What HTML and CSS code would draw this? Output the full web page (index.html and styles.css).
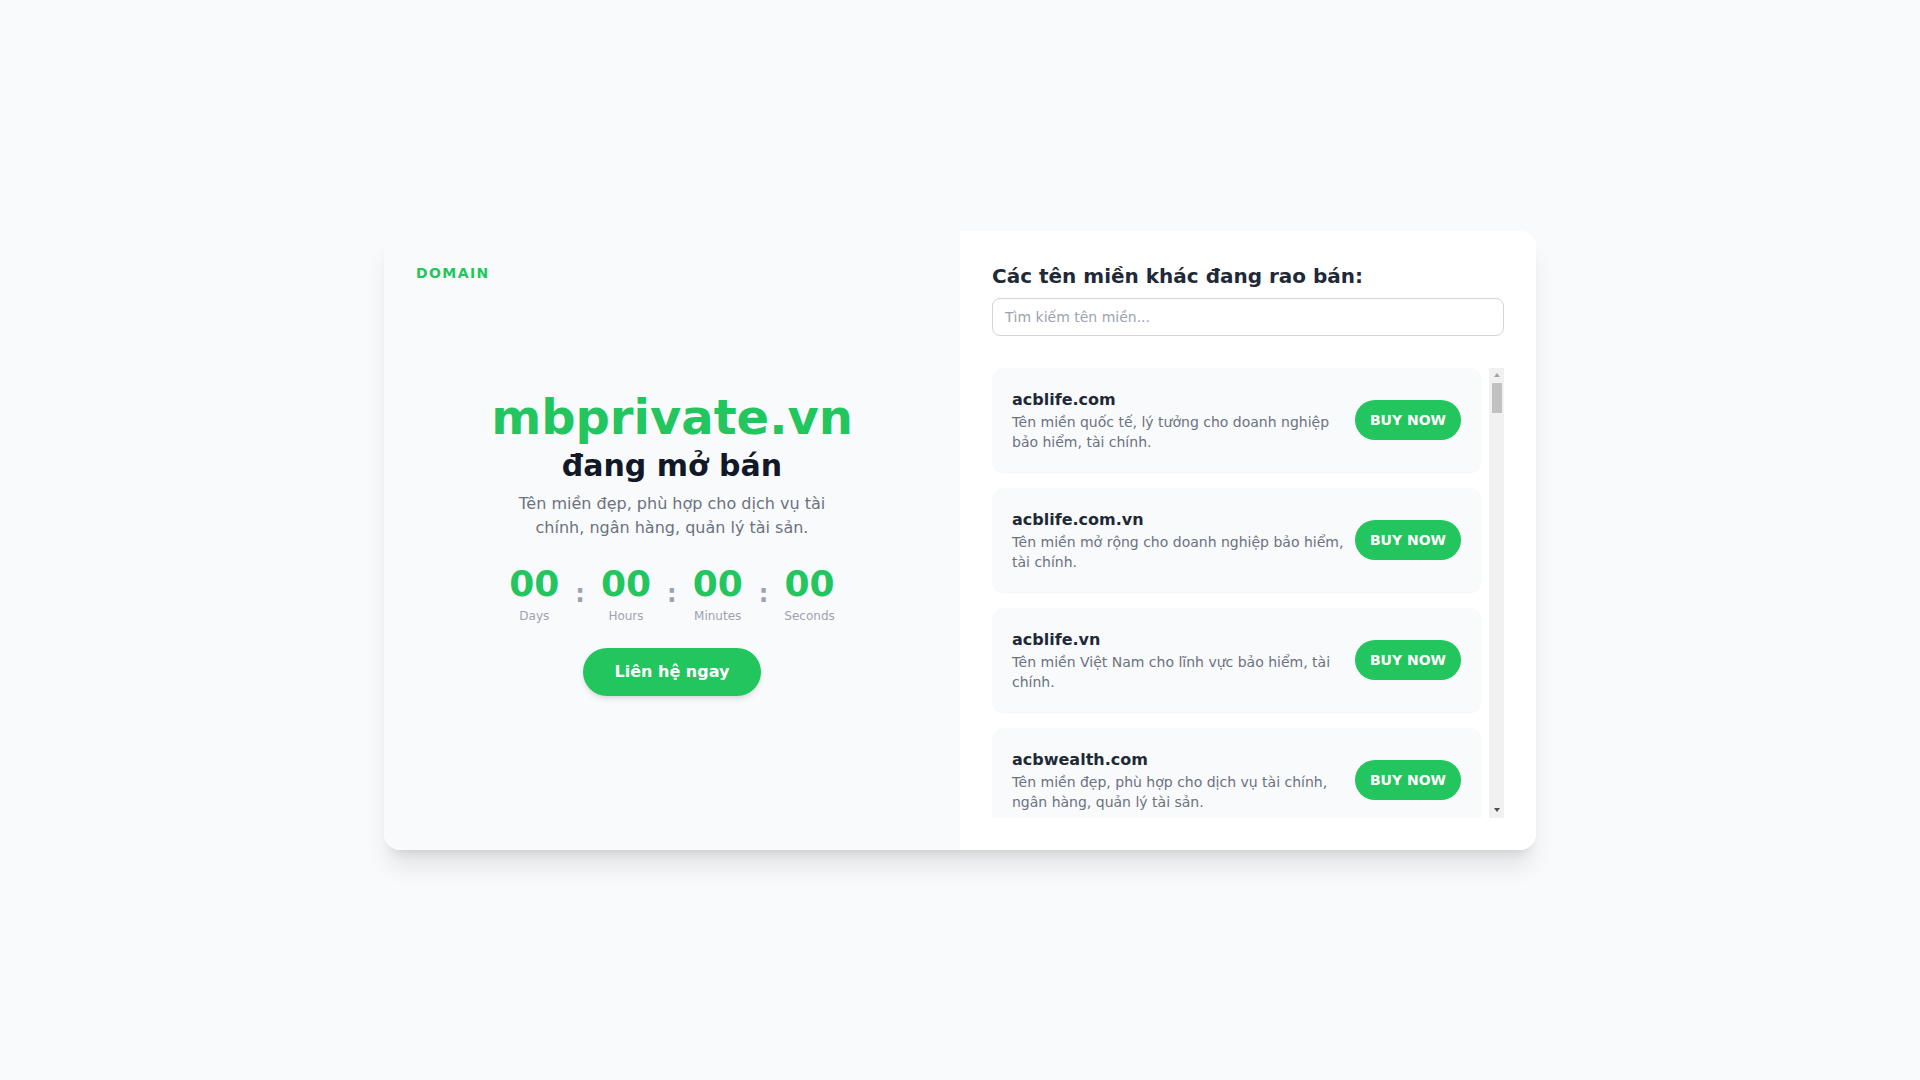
FILE: index.html
```html
<!DOCTYPE html>
<html lang="vi">
<head>
<meta charset="utf-8">
<title>mbprivate.vn đang mở bán</title>
<link rel="stylesheet" href="styles.css">
</head>
<body>
<main class="card">
  <section class="left">
    <div class="brand">Domain</div>
    <div class="hero">
      <h1 class="domain">mbprivate.vn</h1>
      <h2 class="status">đang mở bán</h2>
      <p class="desc">Tên miền đẹp, phù hợp cho dịch vụ tài chính, ngân hàng, quản lý tài sản.</p>
      <div class="countdown">
        <div class="unit"><span class="num">00</span><span class="lbl">Days</span></div>
        <span class="colon">:</span>
        <div class="unit"><span class="num">00</span><span class="lbl">Hours</span></div>
        <span class="colon">:</span>
        <div class="unit"><span class="num">00</span><span class="lbl">Minutes</span></div>
        <span class="colon">:</span>
        <div class="unit"><span class="num">00</span><span class="lbl">Seconds</span></div>
      </div>
      <a class="contact" href="#">Liên hệ ngay</a>
    </div>
  </section>
  <section class="right">
    <h3 class="list-title">Các tên miền khác đang rao bán:</h3>
    <input class="search" type="text" placeholder="Tìm kiếm tên miền...">
    <div class="scroller">
      <div class="list">
        <div class="item"><div class="info"><div class="name">acblife.com</div><div class="note">Tên miền quốc tế, lý tưởng cho doanh nghiệp bảo hiểm, tài chính.</div></div><a class="buy" href="#">Buy now</a></div>
        <div class="item"><div class="info"><div class="name">acblife.com.vn</div><div class="note">Tên miền mở rộng cho doanh nghiệp bảo hiểm, tài chính.</div></div><a class="buy" href="#">Buy now</a></div>
        <div class="item"><div class="info"><div class="name">acblife.vn</div><div class="note">Tên miền Việt Nam cho lĩnh vực bảo hiểm, tài chính.</div></div><a class="buy" href="#">Buy now</a></div>
        <div class="item"><div class="info"><div class="name">acbwealth.com</div><div class="note">Tên miền đẹp, phù hợp cho dịch vụ tài chính, ngân hàng, quản lý tài sản.</div></div><a class="buy" href="#">Buy now</a></div>
        <div class="item"><div class="info"><div class="name">acbwealth.vn</div><div class="note">Tên miền Việt Nam cho dịch vụ quản lý tài sản, ngân hàng.</div></div><a class="buy" href="#">Buy now</a></div>
        <div class="item"><div class="info"><div class="name">bidvprivate.com</div><div class="note">Tên miền quốc tế cho dịch vụ ngân hàng cá nhân cao cấp.</div></div><a class="buy" href="#">Buy now</a></div>
        <div class="item"><div class="info"><div class="name">bidvprivate.vn</div><div class="note">Tên miền Việt Nam cho dịch vụ ngân hàng cá nhân cao cấp.</div></div><a class="buy" href="#">Buy now</a></div>
        <div class="item"><div class="info"><div class="name">bidvwealth.com</div><div class="note">Tên miền đẹp, phù hợp cho dịch vụ tài chính, quản lý tài sản.</div></div><a class="buy" href="#">Buy now</a></div>
        <div class="item"><div class="info"><div class="name">bidvwealth.vn</div><div class="note">Tên miền Việt Nam cho lĩnh vực quản lý tài sản.</div></div><a class="buy" href="#">Buy now</a></div>
        <div class="item"><div class="info"><div class="name">mbwealth.vn</div><div class="note">Tên miền đẹp, phù hợp cho dịch vụ tài chính, ngân hàng.</div></div><a class="buy" href="#">Buy now</a></div>
        <div class="item"><div class="info"><div class="name">mbwealth.com</div><div class="note">Tên miền quốc tế cho dịch vụ quản lý tài sản, đầu tư.</div></div><a class="buy" href="#">Buy now</a></div>
        <div class="item"><div class="info"><div class="name">mbprivate.com</div><div class="note">Tên miền quốc tế cho dịch vụ ngân hàng cá nhân cao cấp.</div></div><a class="buy" href="#">Buy now</a></div>
        <div class="item"><div class="info"><div class="name">techcomlife.vn</div><div class="note">Tên miền Việt Nam cho lĩnh vực bảo hiểm, tài chính.</div></div><a class="buy" href="#">Buy now</a></div>
        <div class="item"><div class="info"><div class="name">tcbprivate.com</div><div class="note">Tên miền quốc tế cho dịch vụ ngân hàng cá nhân cao cấp.</div></div><a class="buy" href="#">Buy now</a></div>
        <div class="item"><div class="info"><div class="name">tcbwealth.vn</div><div class="note">Tên miền Việt Nam cho dịch vụ quản lý tài sản, đầu tư.</div></div><a class="buy" href="#">Buy now</a></div>
        <div class="item"><div class="info"><div class="name">vcbprivate.com</div><div class="note">Tên miền quốc tế cho dịch vụ ngân hàng cá nhân cao cấp.</div></div><a class="buy" href="#">Buy now</a></div>
        <div class="item"><div class="info"><div class="name">vcbwealth.vn</div><div class="note">Tên miền Việt Nam cho dịch vụ quản lý tài sản, ngân hàng.</div></div><a class="buy" href="#">Buy now</a></div>
        <div class="item"><div class="info"><div class="name">vietinwealth.com</div><div class="note">Tên miền đẹp, phù hợp cho dịch vụ tài chính, quản lý tài sản.</div></div><a class="buy" href="#">Buy now</a></div>
        <div class="item"><div class="info"><div class="name">vpbprivate.vn</div><div class="note">Tên miền Việt Nam cho dịch vụ ngân hàng cá nhân cao cấp.</div></div><a class="buy" href="#">Buy now</a></div>
        <div class="item"><div class="info"><div class="name">vpbwealth.com</div><div class="note">Tên miền quốc tế cho dịch vụ quản lý tài sản, đầu tư.</div></div><a class="buy" href="#">Buy now</a></div>
        <div class="item"><div class="info"><div class="name">shbprivate.vn</div><div class="note">Tên miền Việt Nam cho dịch vụ ngân hàng cá nhân cao cấp.</div></div><a class="buy" href="#">Buy now</a></div>
        <div class="item"><div class="info"><div class="name">shbwealth.com</div><div class="note">Tên miền quốc tế cho dịch vụ quản lý tài sản, đầu tư.</div></div><a class="buy" href="#">Buy now</a></div>
        <div class="item"><div class="info"><div class="name">hdbprivate.vn</div><div class="note">Tên miền Việt Nam cho dịch vụ ngân hàng cá nhân cao cấp.</div></div><a class="buy" href="#">Buy now</a></div>
        <div class="item"><div class="info"><div class="name">hdbwealth.com</div><div class="note">Tên miền quốc tế cho dịch vụ quản lý tài sản, đầu tư.</div></div><a class="buy" href="#">Buy now</a></div>
        <div class="item"><div class="info"><div class="name">tpbprivate.vn</div><div class="note">Tên miền Việt Nam cho dịch vụ ngân hàng cá nhân cao cấp.</div></div><a class="buy" href="#">Buy now</a></div>
        <div class="item"><div class="info"><div class="name">tpbwealth.com</div><div class="note">Tên miền quốc tế cho dịch vụ quản lý tài sản, đầu tư.</div></div><a class="buy" href="#">Buy now</a></div>
        <div class="item"><div class="info"><div class="name">stbprivate.vn</div><div class="note">Tên miền Việt Nam cho dịch vụ ngân hàng cá nhân cao cấp.</div></div><a class="buy" href="#">Buy now</a></div>
        <div class="item"><div class="info"><div class="name">stbwealth.com</div><div class="note">Tên miền quốc tế cho dịch vụ quản lý tài sản, đầu tư.</div></div><a class="buy" href="#">Buy now</a></div>
        <div class="item"><div class="info"><div class="name">ocbprivate.vn</div><div class="note">Tên miền Việt Nam cho dịch vụ ngân hàng cá nhân cao cấp.</div></div><a class="buy" href="#">Buy now</a></div>
        <div class="item"><div class="info"><div class="name">ocbwealth.com</div><div class="note">Tên miền quốc tế cho dịch vụ quản lý tài sản, đầu tư.</div></div><a class="buy" href="#">Buy now</a></div>
        <div class="item"><div class="info"><div class="name">mslife.vn</div><div class="note">Tên miền Việt Nam cho lĩnh vực bảo hiểm, tài chính.</div></div><a class="buy" href="#">Buy now</a></div>
        <div class="item"><div class="info"><div class="name">vibprivate.vn</div><div class="note">Tên miền Việt Nam cho dịch vụ ngân hàng cá nhân cao cấp.</div></div><a class="buy" href="#">Buy now</a></div>
        <div class="item"><div class="info"><div class="name">vibwealth.com</div><div class="note">Tên miền quốc tế cho dịch vụ quản lý tài sản, đầu tư.</div></div><a class="buy" href="#">Buy now</a></div>
        <div class="item"><div class="info"><div class="name">seaprivate.vn</div><div class="note">Tên miền Việt Nam cho dịch vụ ngân hàng cá nhân cao cấp.</div></div><a class="buy" href="#">Buy now</a></div>
        <div class="item"><div class="info"><div class="name">seawealth.vn</div><div class="note">Tên miền Việt Nam cho dịch vụ quản lý tài sản, ngân hàng.</div></div><a class="buy" href="#">Buy now</a></div>
        <div class="item"><div class="info"><div class="name">eximwealth.com</div><div class="note">Tên miền quốc tế cho dịch vụ quản lý tài sản, đầu tư.</div></div><a class="buy" href="#">Buy now</a></div>
        <div class="item"><div class="info"><div class="name">lpbprivate.vn</div><div class="note">Tên miền Việt Nam cho dịch vụ ngân hàng cá nhân cao cấp.</div></div><a class="buy" href="#">Buy now</a></div>
        <div class="item"><div class="info"><div class="name">lpbwealth.com</div><div class="note">Tên miền quốc tế cho dịch vụ quản lý tài sản, đầu tư.</div></div><a class="buy" href="#">Buy now</a></div>
        <div class="item"><div class="info"><div class="name">abbprivate.vn</div><div class="note">Tên miền Việt Nam cho dịch vụ ngân hàng cá nhân cao cấp.</div></div><a class="buy" href="#">Buy now</a></div>
        <div class="item"><div class="info"><div class="name">namawealth.vn</div><div class="note">Tên miền Việt Nam cho dịch vụ quản lý tài sản, ngân hàng.</div></div><a class="buy" href="#">Buy now</a></div>
        <div class="item"><div class="info"><div class="name">bacaprivate.vn</div><div class="note">Tên miền Việt Nam cho dịch vụ ngân hàng cá nhân cao cấp.</div></div><a class="buy" href="#">Buy now</a></div>
        <div class="item"><div class="info"><div class="name">klbwealth.vn</div><div class="note">Tên miền Việt Nam cho dịch vụ quản lý tài sản, ngân hàng.</div></div><a class="buy" href="#">Buy now</a></div>
        <div class="item"><div class="info"><div class="name">pvcomwealth.vn</div><div class="note">Tên miền Việt Nam cho dịch vụ quản lý tài sản, ngân hàng.</div></div><a class="buy" href="#">Buy now</a></div>
        <div class="item"><div class="info"><div class="name">baovietwealth.com</div><div class="note">Tên miền quốc tế cho lĩnh vực bảo hiểm, tài chính.</div></div><a class="buy" href="#">Buy now</a></div>
        <div class="item"><div class="info"><div class="name">privatebanking.vn</div><div class="note">Tên miền Việt Nam cho dịch vụ ngân hàng cá nhân cao cấp.</div></div><a class="buy" href="#">Buy now</a></div>
        <div class="item"><div class="info"><div class="name">wealthbank.vn</div><div class="note">Tên miền đẹp, phù hợp cho dịch vụ tài chính, ngân hàng.</div></div><a class="buy" href="#">Buy now</a></div>
        <div class="item"><div class="info"><div class="name">vnwealth.com.vn</div><div class="note">Tên miền mở rộng cho dịch vụ quản lý tài sản.</div></div><a class="buy" href="#">Buy now</a></div>
        <div class="item"><div class="info"><div class="name">vnprivate.vn</div><div class="note">Tên miền Việt Nam cho dịch vụ ngân hàng cá nhân cao cấp.</div></div><a class="buy" href="#">Buy now</a></div>
        <div class="item"><div class="info"><div class="name">quanlytaisan.vn</div><div class="note">Tên miền Việt Nam cho dịch vụ quản lý tài sản.</div></div><a class="buy" href="#">Buy now</a></div>
        <div class="item"><div class="info"><div class="name">taichinhcanhan.vn</div><div class="note">Tên miền Việt Nam cho dịch vụ tài chính cá nhân.</div></div><a class="buy" href="#">Buy now</a></div>
        <div class="item"><div class="info"><div class="name">baohiemnhantho.vn</div><div class="note">Tên miền Việt Nam cho lĩnh vực bảo hiểm nhân thọ.</div></div><a class="buy" href="#">Buy now</a></div>
        <div class="item"><div class="info"><div class="name">nganhangso.vn</div><div class="note">Tên miền Việt Nam cho dịch vụ ngân hàng số.</div></div><a class="buy" href="#">Buy now</a></div>
      </div>
      <div class="sbar" aria-hidden="true">
        <span class="sbar-btn sbar-up"></span>
        <span class="sbar-thumb"></span>
        <span class="sbar-btn sbar-down"></span>
      </div>
    </div>
  </section>
</main>
</body>
</html>
```

FILE: styles.css
```css
* { box-sizing: border-box; }

html, body {
  margin: 0;
  padding: 0;
}

body {
  min-height: 100vh;
  display: flex;
  align-items: center;
  justify-content: center;
  background: #f9fafb;
  font-family: "DejaVu Sans", "Noto Sans", sans-serif;
  color: #1f2937;
}

.card {
  width: 1152px;
  display: grid;
  grid-template-columns: 1fr 1fr;
  background: #ffffff;
  border-radius: 16px;
  overflow: hidden;
  box-shadow: 0 20px 25px -5px rgba(0, 0, 0, 0.1), 0 8px 10px -6px rgba(0, 0, 0, 0.1);
}

/* Left panel */
.left {
  background: #f9fafb;
  padding: 32px;
  display: flex;
  flex-direction: column;
}

.brand {
  font-size: 14px;
  line-height: 20px;
  font-weight: 700;
  letter-spacing: 0.1em;
  text-transform: uppercase;
  color: #22c55e;
}

.hero {
  flex: 1;
  display: flex;
  flex-direction: column;
  align-items: center;
  justify-content: center;
  text-align: center;
  padding-bottom: 12px;
}

.domain {
  margin: 0;
  font-size: 48px;
  line-height: 48px;
  font-weight: 700;
  color: #22c55e;
}

.status {
  margin: 7px 0 0;
  font-size: 30px;
  line-height: 36px;
  font-weight: 700;
  color: #111827;
}

.desc {
  margin: 8px 0 0;
  max-width: 320px;
  font-size: 16px;
  line-height: 24px;
  color: #6b7280;
}

.countdown {
  margin-top: 24px;
  display: flex;
  align-items: center;
  gap: 16px;
}

.unit {
  display: flex;
  flex-direction: column;
  align-items: center;
}

.num {
  font-size: 36px;
  line-height: 40px;
  font-weight: 700;
  color: #22c55e;
}

.lbl {
  margin-top: 4px;
  font-size: 12px;
  line-height: 16px;
  color: #9ca3af;
}

.colon {
  font-size: 24px;
  line-height: 32px;
  font-weight: 700;
  color: #9ca3af;
}

.contact {
  margin-top: 24px;
  display: inline-block;
  padding: 12px 32px;
  border-radius: 9999px;
  background: #22c55e;
  color: #ffffff;
  font-size: 16px;
  line-height: 24px;
  font-weight: 700;
  text-decoration: none;
  box-shadow: 0 4px 6px -1px rgba(0, 0, 0, 0.1), 0 2px 4px -2px rgba(0, 0, 0, 0.1);
}

/* Right panel */
.right {
  background: #ffffff;
  padding: 31px 32px 32px;
  display: flex;
  flex-direction: column;
}

.list-title {
  margin: 0 0 8px;
  font-size: 20px;
  line-height: 28px;
  font-weight: 700;
  color: #1f2937;
}

.search {
  width: 100%;
  height: 38px;
  padding: 8px 12px;
  border: 1px solid #d1d5db;
  border-radius: 8px;
  font-family: "DejaVu Sans", "Noto Sans", sans-serif;
  font-size: 14px;
  line-height: 20px;
  color: #1f2937;
  background: #ffffff;
  outline: none;
}

.search::placeholder {
  color: #9ca3af;
}

.scroller {
  margin-top: 32px;
  height: 450px;
  display: flex;
}

.list {
  flex: 1;
  min-width: 0;
  overflow-y: auto;
  scrollbar-width: none;
  padding-right: 8px;
  display: flex;
  flex-direction: column;
  gap: 16px;
}

.list::-webkit-scrollbar {
  display: none;
}

/* decorative classic scrollbar */
.sbar {
  flex: none;
  width: 15px;
  background: #f1f1f1;
  display: flex;
  flex-direction: column;
  align-items: center;
}

.sbar-btn {
  flex: none;
  width: 15px;
  height: 15px;
  display: flex;
  align-items: center;
  justify-content: center;
}

.sbar-up::before {
  content: "";
  width: 0;
  height: 0;
  border-left: 3.5px solid transparent;
  border-right: 3.5px solid transparent;
  border-bottom: 4px solid #a3a3a3;
}

.sbar-down {
  margin-top: auto;
}

.sbar-down::before {
  content: "";
  width: 0;
  height: 0;
  border-left: 3.5px solid transparent;
  border-right: 3.5px solid transparent;
  border-top: 4px solid #505050;
}

.sbar-thumb {
  flex: none;
  width: 10px;
  height: 30px;
  background: #c1c1c1;
}

.item {
  flex: none;
  display: flex;
  align-items: center;
  gap: 8px;
  padding: 20px;
  background: #f9fafb;
  border-radius: 12px;
  box-shadow: 0 1px 2px rgba(0, 0, 0, 0.05);
}

.info {
  flex: 1;
  min-width: 0;
}

.name {
  font-size: 16px;
  line-height: 24px;
  font-weight: 700;
  color: #1f2937;
}

.note {
  font-size: 14px;
  line-height: 20px;
  color: #6b7280;
}

.buy {
  flex: none;
  padding: 10px 15px;
  border-radius: 9999px;
  background: #22c55e;
  color: #ffffff;
  font-size: 14px;
  line-height: 20px;
  font-weight: 700;
  text-transform: uppercase;
  text-decoration: none;
  white-space: nowrap;
}
```
